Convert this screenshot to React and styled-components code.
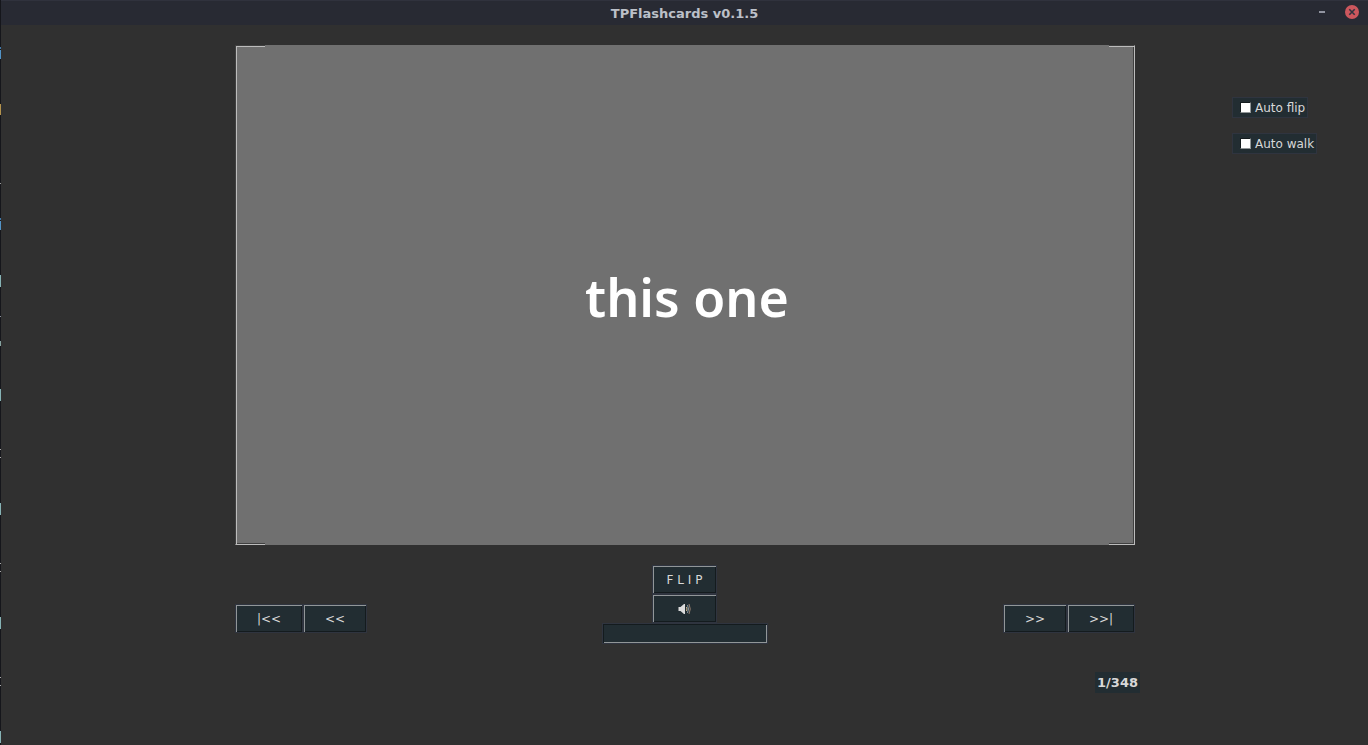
import React, { useState } from "react";
import styled, { createGlobalStyle } from "styled-components";

const color = {
  window: "#303030",
  title: "#282a33",
  titleEdge: "#30323d",
  face: "#222d32",
  rim: "#2f343f",
  light: "#919698",
  dark: "#141b1e",
  text: "#d8d8d8",
  card: "#707070",
};

const GlobalStyle = createGlobalStyle`
  *, *::before, *::after { box-sizing: border-box; }
  body {
    margin: 0;
    background: ${color.window};
    color: ${color.text};
    font: 12px/16px "DejaVu Sans", sans-serif;
  }
  button, input { font: inherit; color: inherit; }
`;

const Screen = styled.div`
  display: grid;
  grid-template-columns: 1px minmax(0, 1fr);
  min-height: 100vh;
`;

const mark = (at, size, tone) =>
  `linear-gradient(${tone}, ${tone}) 0 ${at}px / 1px ${size}px no-repeat`;

const marks = [
  [47, 2, "#3f78a8"],
  [50, 9, "#5294c8"],
  [104, 11, "#b3924c"],
  [183, 1, "#9a9a9a"],
  [218, 2, "#3f78a8"],
  [221, 9, "#5294c8"],
  [275, 12, "#86b3b5"],
  [316, 1, "#8a8f99"],
  [341, 5, "#86a3a0"],
  [389, 12, "#86b3b5"],
  [449, 1, "#aaaaaa"],
  [457, 1, "#aaaaaa"],
  [503, 12, "#86b3b5"],
  [563, 1, "#aaaaaa"],
  [571, 1, "#aaaaaa"],
  [617, 12, "#86b3b5"],
  [677, 1, "#aaaaaa"],
  [685, 1, "#aaaaaa"],
  [731, 12, "#86b3b5"],
];

const BackdropEdge = styled.div`
  background: ${marks.map((m) => mark(...m)).join(", ")}, #15161b;
`;

const Window = styled.div`
  display: flex;
  flex-direction: column;
  min-width: 0;
`;

const TitleBar = styled.header`
  display: grid;
  grid-template-columns: 1fr auto 1fr;
  align-items: start;
  height: 25px;
  padding-right: 9px;
  background: ${color.title};
  border-top: 1px solid ${color.titleEdge};
`;

const Title = styled.h1`
  grid-column: 2;
  margin: 0;
  padding: 4px 0 0 9px;
  font-size: 13px;
  line-height: 18px;
  font-weight: bold;
  color: #bcc0c8;
`;

const WindowButtons = styled.div`
  display: flex;
  justify-content: flex-end;
  gap: 16px;
  padding-top: 4px;
`;

const WindowButton = styled.button`
  display: flex;
  width: 14px;
  height: 14px;
  padding: 0;
  border: 0;
  background: none;
`;

const Body = styled.main`
  display: grid;
  grid-template-columns: 234px minmax(0, 1fr) 233px;
  padding-top: 20px;
`;

const Deck = styled.section`
  grid-column: 2;
  display: flex;
  flex-direction: column;
`;

const Card = styled.article`
  display: flex;
  min-height: 500px;
  padding: 0 25px 0 29px;
  background: ${color.card};
  border: 1px solid;
  border-color: #404040 #bcbcbc #bcbcbc #404040;
  box-shadow: inset 1px 1px #bcbcbc, inset -1px -1px #404040;
`;

const CardFace = styled.div`
  flex: 1;
  display: flex;
  align-items: center;
  justify-content: center;
  margin: -1px 0;
  padding-top: 4px;
  background: ${color.card};
  color: #fff;
  font: 600 52px/72px "Noto Sans", sans-serif;
`;

const Controls = styled.div`
  display: grid;
  grid-template-columns: 1fr auto 1fr;
  align-items: center;
  margin-top: 20px;
`;

const ButtonRow = styled.div`
  display: flex;
  justify-content: ${(p) => (p.$end ? "flex-end" : "flex-start")};
  padding-top: 28px;
`;

const Stack = styled.div`
  display: flex;
  flex-direction: column;
  align-items: center;
`;

const widths = { narrow: 64, middle: 65, wide: 68 };

const Button = styled.button`
  display: flex;
  align-items: center;
  justify-content: center;
  width: ${(p) => widths[p.$size || "narrow"]}px;
  height: 29px;
  padding: 0;
  border: 1px solid ${color.rim};
  background: ${color.face};
  box-shadow: inset 1px 1px ${color.light}, inset -1px -1px ${color.dark};

  ${Stack} & {
    margin-right: 1px;
  }

  &:active {
    box-shadow: inset 1px 1px ${color.dark}, inset -1px -1px ${color.light};
  }
`;

const Answer = styled.input`
  width: 166px;
  height: 21px;
  padding: 0 4px;
  border: 1px solid ${color.rim};
  background: ${color.face};
  box-shadow: inset 1px 1px ${color.dark}, inset -1px -1px ${color.light};
  outline: none;
`;

const Counter = styled.output`
  align-self: flex-end;
  margin: 28px -5px 0 0;
  padding: 3px 2px 2px;
  background: ${color.face};
  font-size: 13px;
  line-height: 16px;
  font-weight: bold;
`;

const Options = styled.aside`
  display: flex;
  flex-direction: column;
  align-items: flex-start;
  gap: 15px;
  padding: 52px 0 0 97px;
`;

const Option = styled.label`
  display: flex;
  align-items: center;
  gap: 4px;
  height: 21px;
  padding: 0 2px 0 7px;
  border: 1px solid ${color.rim};
  background: ${color.face};
`;

const Tick = styled.input`
  appearance: none;
  width: 11px;
  height: 11px;
  margin: 0;
  background: #fff;
  border: 1px solid;
  border-color: ${color.dark} ${color.light} ${color.light} ${color.dark};

  &:checked {
    background: #5294c8;
  }
`;

function SpeakerIcon() {
  return (
    <svg width="13" height="12" viewBox="0 0 13 12" fill="none">
      <path d="M0.500 4h2l3.500-3h1v10H6L2.500 8h-2z" fill="#dcdcdc" />
      <path d="M8.500 4q1 2 0 4" stroke="#d8c098" />
      <path d="M9.500 2q2 4 0 8" stroke="#8b9ba4" />
      <path d="M11 1q2.500 5 0 10" stroke="#947f70" />
    </svg>
  );
}

function Toggle({ id, children }) {
  return (
    <Option htmlFor={id}>
      <Tick id={id} type="checkbox" />
      {children}
    </Option>
  );
}

export default function App() {
  const [answer, setAnswer] = useState("");
  return (
    <Screen>
      <GlobalStyle />
      <BackdropEdge />
      <Window>
        <TitleBar>
          <Title>TPFlashcards v0.1.5</Title>
          <WindowButtons>
            <WindowButton aria-label="Minimize">
              <svg width="14" height="14">
                <rect x="4" y="6" width="6" height="2" fill="#9194a0" />
              </svg>
            </WindowButton>
            <WindowButton aria-label="Close">
              <svg width="14" height="14">
                <circle cx="7" cy="7" r="7" fill="#cc575d" />
                <path d="M4.300 4.300l5.400 5.400m0-5.400l-5.400 5.400" stroke="#2f343f" strokeWidth="1.600" />
              </svg>
            </WindowButton>
          </WindowButtons>
        </TitleBar>
        <Body>
          <Deck>
            <Card>
              <CardFace>this one</CardFace>
            </Card>
            <Controls>
              <ButtonRow>
                <Button $size="wide">|&lt;&lt;</Button>
                <Button>&lt;&lt;</Button>
              </ButtonRow>
              <Stack>
                <Button $size="middle">F L I P</Button>
                <Button $size="middle" aria-label="Play sound">
                  <SpeakerIcon />
                </Button>
                <Answer
                  aria-label="Answer"
                  value={answer}
                  onChange={(e) => setAnswer(e.target.value)}
                />
              </Stack>
              <ButtonRow $end>
                <Button>&gt;&gt;</Button>
                <Button $size="wide">&gt;&gt;|</Button>
              </ButtonRow>
            </Controls>
            <Counter>1/348</Counter>
          </Deck>
          <Options>
            <Toggle id="auto-flip">Auto flip</Toggle>
            <Toggle id="auto-walk">Auto walk</Toggle>
          </Options>
        </Body>
      </Window>
    </Screen>
  );
}
